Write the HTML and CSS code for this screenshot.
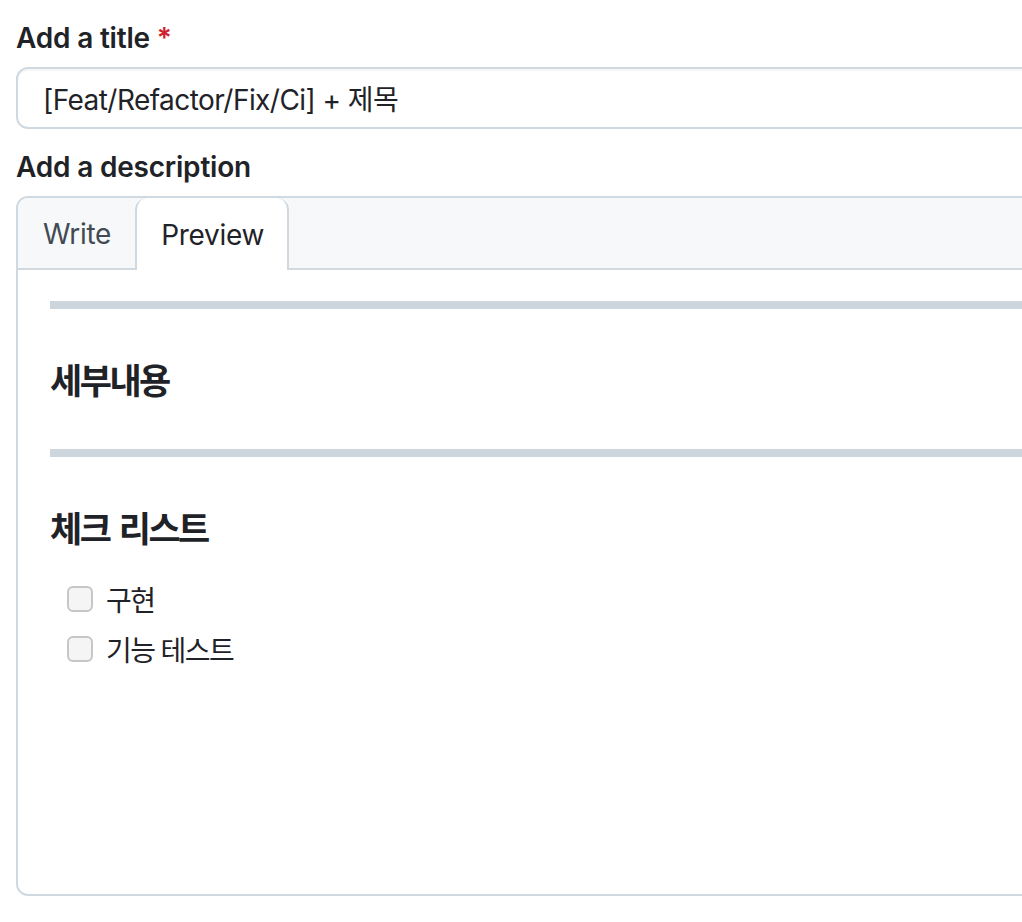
FILE: index.html
```html
<!DOCTYPE html>
<html lang="ko">
<head>
<meta charset="utf-8">
<link rel="stylesheet" href="styles.css">
</head>
<body>
<div class="form">
  <label class="label">Add a title <span class="req">*</span></label>
  <div class="input">[Feat/Refactor/Fix/Ci] + 제목</div>
  <label class="label label-desc">Add a description</label>
  <div class="editor">
    <div class="tabs">
      <div class="tab tab-write">Write</div>
      <div class="tab tab-active">Preview</div>
    </div>
    <div class="preview">
      <hr class="rule">
      <h3 class="heading">세부내용</h3>
      <hr class="rule">
      <h3 class="heading">체크 리스트</h3>
      <ul class="tasks">
        <li class="task"><span class="check"></span><span class="task-text">구현</span></li>
        <li class="task"><span class="check"></span><span class="task-text">기능 테스트</span></li>
      </ul>
    </div>
  </div>
</div>
</body>
</html>
```

FILE: styles.css
```css
html, body {
  margin: 0;
  padding: 0;
  overflow: hidden;
  background: #ffffff;
}
body {
  font-family: Inter, "Noto Sans CJK KR", sans-serif;
  color: #1f2328;
  font-size: 28px;
}
.form {
  padding: 17px 0 0 16px;
  width: 1100px;
  display: flex;
  flex-direction: column;
}
.label {
  display: block;
  font-weight: 600;
  font-size: 28px;
  line-height: 42px;
  letter-spacing: -0.2px;
}
.req {
  color: #cf222e;
}
.input {
  margin-top: 8px;
  height: 58px;
  border: 2px solid #d1d9e0;
  border-radius: 12px;
  padding: 0 24px 0 25px;
  display: flex;
  align-items: center;
  font-size: 28px;
  box-shadow: inset 0 2px 0 rgba(208, 215, 222, 0.2);
  letter-spacing: -0.55px;
}
.label-desc {
  margin-top: 17px;
}
.editor {
  margin-top: 8px;
  border: 2px solid #d1d9e0;
  border-radius: 12px;
  overflow: hidden;
  display: flex;
  flex-direction: column;
}
.tabs {
  display: flex;
  background: #f6f8fa;
  border-bottom: 2px solid #d1d9e0;
  height: 70px;
}
.tab {
  padding: 2px 24px 0 25px;
  display: flex;
  align-items: center;
  color: #424a53;
  font-size: 28px;
  letter-spacing: -0.3px;
}
.tab-active {
  background: #ffffff;
  color: #1f2328;
  border: 2px solid #d1d9e0;
  border-top: none;
  border-bottom: none;
  border-radius: 12px 12px 0 0;
  margin-bottom: -2px;
  padding: 2px 23px 0 24px;
}
.tab-write {
  border-top-left-radius: 10px;
}
.preview {
  padding: 31px 32px 0 32px;
  height: 593px;
}
.rule {
  height: 8px;
  border: none;
  background: #cdd5dd;
  margin: 0;
}
.heading {
  margin: 48px 0 48px 0;
  font-family: "Noto Sans CJK KR", sans-serif;
  font-size: 35px;
  line-height: 44px;
  font-weight: 700;
  letter-spacing: -2.5px;
  word-spacing: 2px;
}
.heading:last-of-type {
  margin-bottom: 29px;
}
.tasks {
  list-style: none;
  margin: 0;
  padding: 0 0 0 17px;
  display: flex;
  flex-direction: column;
  gap: 8px;
}
.task {
  display: flex;
  align-items: center;
  gap: 13px;
  line-height: 42px;
  font-family: "Noto Sans CJK KR", sans-serif;
  font-size: 28px;
  letter-spacing: -1.6px;
  word-spacing: 0;
}
.check {
  width: 22px;
  height: 22px;
  border: 2px solid #c6c6c6;
  border-radius: 6px;
  background: #f5f5f5;
  flex: none;
}
```
